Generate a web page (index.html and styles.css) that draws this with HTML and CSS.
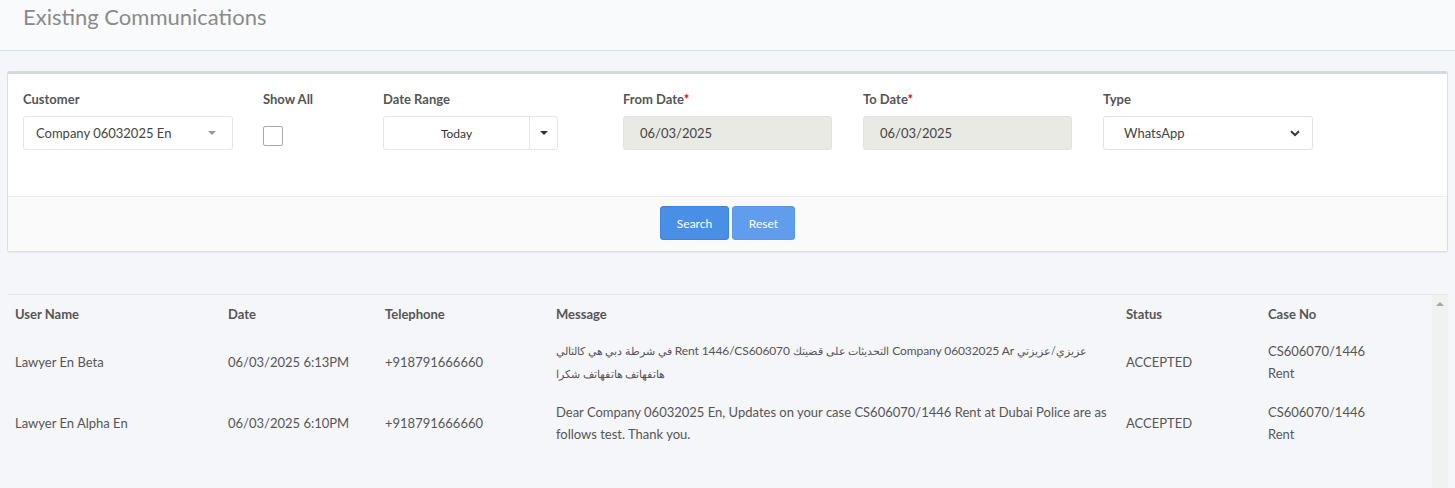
FILE: index.html
```html
<!DOCTYPE html>
<html lang="en">
<head>
<meta charset="utf-8">
<title>Existing Communications</title>
<link rel="stylesheet" href="styles.css">
</head>
<body>
<header class="page-header">
  <h1 class="page-title">Existing Communications</h1>
</header>

<main class="content">
  <section class="panel">
    <div class="panel-body">
      <div class="field">
        <label class="field-label">Customer</label>
        <div class="select2">
          <span class="select2-text">Company 06032025 En</span>
          <span class="select2-arrow"></span>
        </div>
      </div>
      <div class="field field-narrow">
        <label class="field-label">Show All</label>
        <span class="checkbox"></span>
      </div>
      <div class="field">
        <label class="field-label">Date Range</label>
        <div class="btn-group">
          <span class="btn-range">Today</span>
          <span class="btn-caret"><span class="caret"></span></span>
        </div>
      </div>
      <div class="field">
        <label class="field-label">From Date<span class="req">*</span></label>
        <div class="input readonly">06/03/2025</div>
      </div>
      <div class="field">
        <label class="field-label">To Date<span class="req">*</span></label>
        <div class="input readonly">06/03/2025</div>
      </div>
      <div class="field">
        <label class="field-label">Type</label>
        <div class="input select">
          <span>WhatsApp</span>
          <svg class="chev" width="10" height="7" viewBox="0 0 10 7"><path d="M1 1.2 L5 5 L9 1.2" fill="none" stroke="#343a40" stroke-width="2"/></svg>
        </div>
      </div>
    </div>
    <div class="panel-footer">
      <button class="btn btn-search">Search</button>
      <button class="btn btn-reset">Reset</button>
    </div>
  </section>

  <section class="table-wrap">
    <div class="table-scroll">
      <table class="grid">
        <colgroup>
          <col class="c-user"><col class="c-date"><col class="c-tel"><col class="c-msg"><col class="c-status"><col class="c-case">
        </colgroup>
        <thead>
          <tr><th>User Name</th><th>Date</th><th>Telephone</th><th>Message</th><th>Status</th><th>Case No</th></tr>
        </thead>
        <tbody>
          <tr>
            <td>Lawyer En Beta</td>
            <td>06/03/2025 6:13PM</td>
            <td>+918791666660</td>
            <td><div class="msg-rtl" dir="rtl"><span class="line"><span class="ar">عزيزي/عزيزتي</span> Company 06032025 Ar <span class="ar">التحديثات على قضيتك</span> Rent 1446/CS606070 <span class="ar">في شرطة دبي هي كالتالي</span></span><br><span class="ar">هاتفهاتف هاتفهاتف شكرا</span></div></td>
            <td>ACCEPTED</td>
            <td>CS606070/1446<br>Rent</td>
          </tr>
          <tr>
            <td>Lawyer En Alpha En</td>
            <td>06/03/2025 6:10PM</td>
            <td>+918791666660</td>
            <td>Dear Company 06032025 En, Updates on your case CS606070/1446 Rent at Dubai Police are as follows test. Thank you.</td>
            <td>ACCEPTED</td>
            <td>CS606070/1446<br>Rent</td>
          </tr>
        </tbody>
      </table>
    </div>
    <div class="scrollbar"><span class="scroll-up"></span></div>
  </section>
</main>
</body>
</html>
```
FILE: styles.css
```css
* { box-sizing: border-box; }
html, body { height: 100%; }
body {
  margin: 0;
  background: #f5f6fa;
  font-family: "Lato", "Open Sans", "Noto Sans", sans-serif;
  font-size: 13px;
  color: #555;
  overflow: hidden;
}
.page-header {
  height: 51px;
  background: #f9fafc;
  border-bottom: 1px solid #d3e2e6;
  padding: 3px 23px 0;
}
.page-title {
  margin: 0;
  font-size: 22px;
  font-weight: 400;
  color: #8a8a8a;
  line-height: 28px;
}
.content {
  padding: 20px 7px 0 7px;
}
.panel {
  background: #fff;
  border: 1px solid #d8dee4;
  border-top: 3px solid #d2dbe2;
  border-radius: 3px;
  box-shadow: 0 1px 1px rgba(0,0,0,0.05);
}
.panel-body {
  display: flex;
  padding: 16px 15px 0;
  height: 122px;
}
.field {
  width: 240px;
  display: flex;
  flex-direction: column;
  align-items: flex-start;
}
.field-narrow { width: 120px; }
.field-label {
  font-weight: 700;
  font-size: 13px;
  color: #555;
  line-height: 18px;
  margin-bottom: 8px;
}
.req { color: #e00; }
.select2 {
  width: 210px;
  height: 34px;
  border: 1px solid #e4e6ea;
  border-radius: 3px;
  display: flex;
  align-items: center;
  justify-content: space-between;
  padding: 0 16px 0 12px;
  color: #444;
}
.select2-arrow {
  width: 0; height: 0;
  border-left: 4px solid transparent;
  border-right: 4px solid transparent;
  border-top: 4px solid #999;
}
.checkbox {
  width: 20px; height: 20px;
  margin-top: 10px;
  border: 1px solid #aaa;
  border-radius: 2px;
  background: #fff;
}
.btn-group {
  display: flex;
  height: 34px;
  border: 1px solid #e4e6ea;
  border-radius: 3px;
}
.btn-range {
  width: 146px;
  display: flex;
  align-items: center;
  justify-content: center;
  font-size: 12px;
  color: #333;
  border-right: 1px solid #e4e6ea;
}
.btn-caret {
  width: 27px;
  display: flex;
  align-items: center;
  justify-content: center;
}
.caret {
  width: 0; height: 0;
  border-left: 4px solid transparent;
  border-right: 4px solid transparent;
  border-top: 4px solid #333;
}
.input {
  width: 209px;
  height: 34px;
  border: 1px solid #dfe3e6;
  border-radius: 3px;
  display: flex;
  align-items: center;
  padding: 0 16px;
  color: #444;
}
.readonly { background: #eaeae4; }
.select {
  width: 210px;
  background: #fff;
  justify-content: space-between;
  padding: 0 12px 0 20px;
}
.chev { display: block; }
.panel-footer {
  height: 55px;
  background: #fafafa;
  border-top: 1px solid #ececec;
  display: flex;
  align-items: center;
  justify-content: center;
  gap: 3px;
  padding-bottom: 2px;
}
.btn {
  height: 34px;
  border: 1px solid transparent;
  border-radius: 3px;
  color: #fff;
  font-family: inherit;
  font-size: 12px;
  padding: 0 12px;
}
.btn-search { background: #4a8fe6; border-color: #3d82dc; width: 69px; }
.btn-reset { background: #609ded; border-color: #5a97e6; width: 63px; }

.table-wrap {
  margin-top: 42px;
  margin-left: 1px;
  display: flex;
  border-top: 1px solid #e6e8ee;
  height: 200px;
}
.table-scroll { flex: 1; }
.grid {
  width: 100%;
  border-collapse: collapse;
  table-layout: fixed;
}
.c-user { width: 213px; }
.c-date { width: 157px; }
.c-tel { width: 171px; }
.c-msg { width: 570px; }
.c-status { width: 142px; }
.c-case { width: auto; }
.grid th {
  text-align: left;
  font-weight: 700;
  color: #555;
  padding: 9px 7px 9px;
  height: 37px;
  line-height: 18px;
  vertical-align: middle;
}
.grid td {
  padding: 7px 7px 8px;
  line-height: 22px;
  height: 60px;
  vertical-align: middle;
  color: #555;
}
.msg-rtl { text-align: left; white-space: nowrap; }
.line { font-size: 12px; letter-spacing: -0.1px; }
.ar { font-size: 10.5px; letter-spacing: 0; }
.scrollbar {
  width: 16px;
  background: #f1f1f1;
  display: flex;
  justify-content: center;
  padding-top: 7px;
}
.scroll-up {
  width: 0; height: 0;
  border-left: 4px solid transparent;
  border-right: 4px solid transparent;
  border-bottom: 4px solid #a3a3a3;
}
```
